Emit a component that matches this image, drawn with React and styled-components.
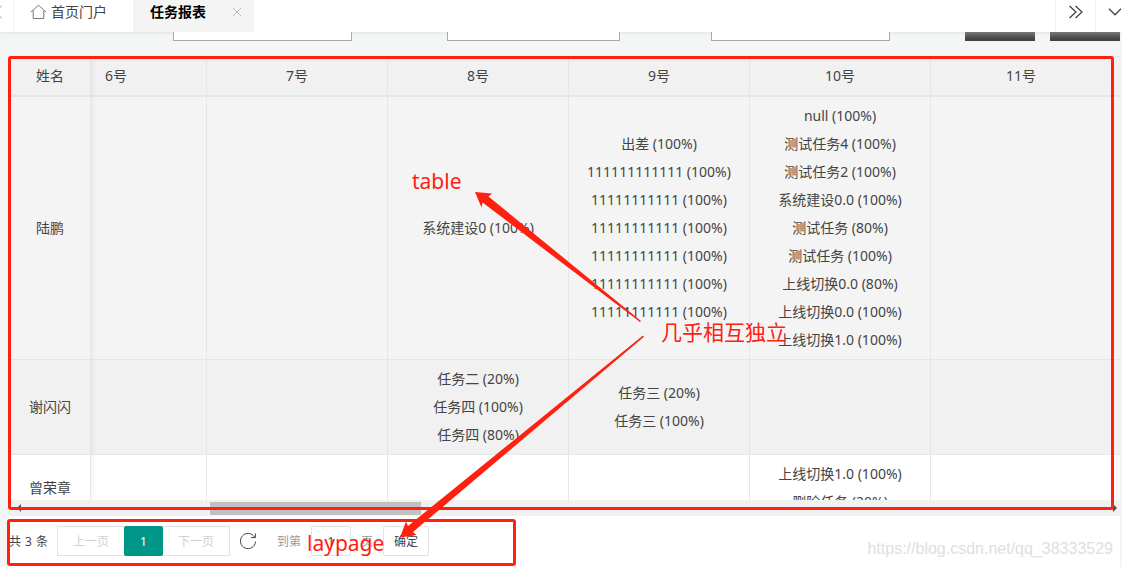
import React from "react";
import styled, { createGlobalStyle } from "styled-components";

const RED = "#ff2010";
const LINE = "#e6e6e6";

const GlobalStyle = createGlobalStyle`
  *, *::before, *::after { box-sizing: border-box; }
  body { margin: 0; }
  body, button, input, select {
    font-family: "Noto Sans", "Noto Sans CJK SC", sans-serif;
  }
`;

const Page = styled.div`
  position: relative;
  display: flex;
  flex-direction: column;
  height: 100vh;
  overflow: hidden;
  background: #f4f6f6;
  color: #444;
  font-size: 14px;
`;

const TabBar = styled.nav`
  display: flex;
  flex: none;
  height: 32px;
  background: #fff;
  box-shadow: 0 1px 3px rgba(0, 0, 0, 0.08);
`;

const Tab = styled.a`
  display: flex;
  align-items: center;
  gap: 4px;
  padding: 0 26px 8px 16px;
  border-left: 1px solid #f4f4f4;
  color: #444;
  line-height: 24px;
  text-decoration: none;
`;

const ActiveTab = styled.div`
  display: flex;
  align-items: center;
  gap: 25px;
  padding: 0 11px 8px 17px;
  background: #f4f4f4;
  color: #000;
  font-weight: 700;
  line-height: 24px;
`;

const IconButton = styled.button`
  display: flex;
  align-items: center;
  justify-content: center;
  padding: 0;
  border: 0;
  background: none;
  color: ${(p) => p.$color || "#444"};
`;

const ScrollLeft = styled(IconButton)`
  justify-content: flex-start;
  width: 13px;
  padding-bottom: 8px;
`;

const TabTools = styled.div`
  display: flex;
  margin-left: auto;
  button {
    width: 40px;
    padding-bottom: 8px;
    border-left: 1px solid #f4f4f4;
  }
  button:last-child {
    width: 27px;
    padding-left: 12px;
    overflow: hidden;
  }
`;

const Filters = styled.form`
  display: grid;
  grid-template-columns: 179fr 95fr 173fr 91fr 179fr 75fr 70fr 15fr 70fr;
  flex: none;
  margin: 0 2px 15px 173px;
  & > :nth-child(2) { grid-column: 3; }
  & > :nth-child(3) { grid-column: 5; }
  & > :nth-child(4) { grid-column: 7; }
  & > :nth-child(5) { grid-column: 9; }
`;

const FilterInput = styled.input`
  width: 100%;
  height: 9px;
  padding: 0;
  border: 1px solid #a9a9a9;
  border-top: 0;
  border-radius: 0;
  background: #fff;
`;

const FilterButton = styled.button`
  height: 9px;
  padding: 0;
  border: 0;
  background: linear-gradient(#777, #484848 70%, #404040);
`;

const Card = styled.main`
  display: flex;
  flex: 1;
  flex-direction: column;
  min-height: 0;
  margin: 0 2px 0 9px;
  background: #fff;
`;

const TableArea = styled.div`
  display: flex;
  flex: 1;
  min-height: 0;
  overflow: hidden;
  border: 1px solid ${LINE};
  border-width: 1px 0 0 1px;
`;

const FrozenPane = styled.div`
  position: relative;
  z-index: 1;
  flex: none;
  width: 81px;
  box-shadow: 0 0 8px rgba(0, 0, 0, 0.08);
`;

const ScrollPane = styled.div`
  flex: 1;
  min-width: 0;
  overflow: hidden;
`;

const Grid = styled.table`
  width: ${(p) => p.$width}px;
  margin-left: ${(p) => p.$shift || 0}px;
  table-layout: fixed;
  border-collapse: separate;
  border-spacing: 0;
`;

const HeadCell = styled.th`
  height: 40px;
  padding: 0;
  border-right: 1px solid ${LINE};
  border-bottom: 2px solid ${LINE};
  background: #f1f1f1;
  font-weight: 400;
  line-height: 28px;
  text-align: center;
`;

const Row = styled.tr`
  background: ${(p) => p.$tone};
`;

const Cell = styled.td`
  height: ${(p) => p.$lines * 28 + 11}px;
  padding: 5px 0;
  border-right: 1px solid ${LINE};
  border-bottom: 1px solid ${LINE};
  line-height: 28px;
  text-align: center;
  white-space: nowrap;
`;

const Task = styled.div`
  height: 28px;
`;

const ScrollTrack = styled.div`
  display: flex;
  align-items: center;
  justify-content: space-between;
  flex: none;
  height: 16px;
  padding: 0 3px 0 8px;
  background: #f1f1f1;
`;

const ScrollThumb = styled.div`
  width: 19.2%;
  height: 13px;
  margin-right: auto;
  margin-left: 17.2%;
  background: #c1c1c1;
`;

const Pager = styled.div`
  display: flex;
  align-items: flex-start;
  flex: none;
  height: 51px;
  padding-top: 10px;
  font-size: 12px;
  line-height: 32px;
`;

const Total = styled.span`
  display: flex;
  gap: 4px;
  width: 48px;
  white-space: nowrap;
`;

const PageButton = styled.button`
  height: 30px;
  margin-right: -1px;
  padding: 2px 15px 0;
  border: 1px solid #e2e2e2;
  background: #fff;
  color: #d2d2d2;
  font-size: 12px;
  line-height: 26px;
`;

const CurrentPage = styled(PageButton)`
  position: relative;
  width: 39px;
  border-color: #009688;
  border-radius: 2px;
  background: #009688;
  color: #fff;
`;

const Refresh = styled(IconButton)`
  width: 18px;
  height: 30px;
  margin: 0 20px 0 10px;
`;

const Jump = styled.label`
  display: flex;
  gap: 10px;
  color: #999;
`;

const PageInput = styled.input`
  width: 40px;
  height: 30px;
  padding: 0;
  border: 1px solid #e2e2e2;
  border-radius: 2px;
  background: #fff;
  color: #444;
  font-size: 12px;
  text-align: center;
`;

const Confirm = styled(PageButton)`
  margin-left: 10px;
  padding: 2px 10px 0;
  border-radius: 2px;
  color: #444;
`;

const Marks = styled.div`
  position: absolute;
  inset: 0;
  z-index: 2;
  pointer-events: none;
`;

const Frame = styled.div`
  position: absolute;
  border: 3px solid ${RED};
  border-radius: 3px;
`;

const TableFrame = styled(Frame)`
  top: 56px;
  right: 8px;
  bottom: 57px;
  left: 8px;
`;

const PagerFrame = styled(Frame)`
  bottom: 1px;
  left: 7px;
  width: 509px;
  height: 47px;
`;

const Arrows = styled.svg`
  position: absolute;
  top: 0;
  left: 0;
  fill: ${RED};
`;

const Note = styled.span`
  position: absolute;
  top: ${(p) => p.$y}px;
  left: ${(p) => p.$x}px;
  color: ${RED};
  font-size: 21px;
  line-height: 30px;
  white-space: nowrap;
`;

const Watermark = styled.span`
  position: absolute;
  right: 9px;
  bottom: 8px;
  color: #dedede;
  font-family: "Liberation Sans", sans-serif;
  font-size: 16px;
  line-height: 20px;
`;

const days = ["6号", "7号", "8号", "9号", "10号", "11号", ""];

const people = [
  {
    name: "陆鹏",
    tone: "#f4f4f4",
    lines: 9,
    tasks: [
      [],
      [],
      ["系统建设0 (100%)"],
      [
        "出差 (100%)",
        "111111111111 (100%)",
        "11111111111 (100%)",
        "11111111111 (100%)",
        "11111111111 (100%)",
        "11111111111 (100%)",
        "11111111111 (100%)",
      ],
      [
        "null (100%)",
        "测试任务4 (100%)",
        "测试任务2 (100%)",
        "系统建设0.0 (100%)",
        "测试任务 (80%)",
        "测试任务 (100%)",
        "上线切换0.0 (80%)",
        "上线切换0.0 (100%)",
        "上线切换1.0 (100%)",
      ],
      [],
      [],
    ],
  },
  {
    name: "谢闪闪",
    tone: "#f1f1f1",
    lines: 3,
    tasks: [
      [],
      [],
      ["任务二 (20%)", "任务四 (100%)", "任务四 (80%)"],
      ["任务三 (20%)", "任务三 (100%)"],
      [],
      [],
      [],
    ],
  },
  {
    name: "曾荣章",
    tone: "#fff",
    lines: 2,
    tasks: [[], [], [], [], ["上线切换1.0 (100%)", "删除任务 (20%)"], [], []],
  },
];

function Stroke({ w, h, d, width = 1, color = "currentColor" }) {
  return (
    <svg width={w} height={h} viewBox={`0 0 ${w} ${h}`} fill="none" stroke={color} strokeWidth={width} aria-hidden="true">
      <path d={d} />
    </svg>
  );
}

function Tabs() {
  return (
    <TabBar>
      <ScrollLeft $color="#aaa" aria-label="向左">
        <Stroke w={2} h={14} d="M1.5 .5 -4 7 1.5 13.5" />
      </ScrollLeft>
      <Tab href="#home">
        <Stroke w={17} h={16} color="#777" d="M.8 8.2 8.5 1.2 16.2 8.2M3.2 6.5V14.5H13.8V6.5" />
        首页门户
      </Tab>
      <ActiveTab>
        任务报表
        <IconButton $color="#b8b8b8" aria-label="关闭">
          <Stroke w={12} h={10} d="M2 1 10 9M10 1 2 9" />
        </IconButton>
      </ActiveTab>
      <TabTools>
        <IconButton aria-label="向右">
          <Stroke w={16} h={14} width={1.3} d="M1.5 1 8 7 1.5 13M7.5 1 14 7 7.5 13" />
        </IconButton>
        <IconButton aria-label="更多">
          <Stroke w={15} h={10} width={1.3} d="M1 1.5 7.5 8 14 1.5" />
        </IconButton>
      </TabTools>
    </TabBar>
  );
}

function NameTable() {
  return (
    <Grid $width={81}>
      <thead>
        <tr><HeadCell scope="col">姓名</HeadCell></tr>
      </thead>
      <tbody>
        {people.map((p) => (
          <Row key={p.name} $tone={p.tone}>
            <Cell $lines={p.lines}>{p.name}</Cell>
          </Row>
        ))}
      </tbody>
    </Grid>
  );
}

function TaskTable() {
  return (
    <Grid $width={days.length * 181} $shift={-65}>
      <thead>
        <tr>
          {days.map((d, i) => <HeadCell key={i} scope="col">{d}</HeadCell>)}
        </tr>
      </thead>
      <tbody>
        {people.map((p) => (
          <Row key={p.name} $tone={p.tone}>
            {p.tasks.map((list, i) => (
              <Cell key={i} $lines={p.lines}>
                {list.map((t, j) => <Task key={j}>{t}</Task>)}
              </Cell>
            ))}
          </Row>
        ))}
      </tbody>
    </Grid>
  );
}

export default function App() {
  return (
    <Page>
      <GlobalStyle />
      <Tabs />
      <Filters>
        <FilterInput aria-label="年份" />
        <FilterInput aria-label="月份" />
        <FilterInput aria-label="姓名" />
        <FilterButton type="button" aria-label="查询" />
        <FilterButton type="button" aria-label="重置" />
      </Filters>
      <Card>
        <TableArea>
          <FrozenPane><NameTable /></FrozenPane>
          <ScrollPane><TaskTable /></ScrollPane>
        </TableArea>
        <ScrollTrack>
          <svg width="4" height="8" viewBox="0 0 4 8" aria-hidden="true"><path d="M4 0V8L0 4Z" fill="#505050" /></svg>
          <ScrollThumb />
          <svg width="4" height="8" viewBox="0 0 4 8" aria-hidden="true"><path d="M0 0V8L4 4Z" fill="#505050" /></svg>
        </ScrollTrack>
        <Pager>
          <Total><span>共</span> <span>3</span> <span>条</span></Total>
          <PageButton type="button">上一页</PageButton>
          <CurrentPage type="button">1</CurrentPage>
          <PageButton type="button">下一页</PageButton>
          <Refresh type="button" aria-label="刷新">
            <Stroke w={18} h={18} width={1} color="#444" d="M15.6 5.2A7.6 7.6 0 1 0 16.6 9.6M16.4 1.4V5.6H12" />
          </Refresh>
          <Jump>
            到第
            <PageInput defaultValue="1" />
            页
          </Jump>
          <Confirm type="button">确定</Confirm>
        </Pager>
      </Card>
      <Marks>
        <TableFrame />
        <PagerFrame />
        <Arrows width="660" height="560" viewBox="0 0 660 560" aria-hidden="true">
          <path d="M475 192 492 193.5 488.5 196.5 641 321 640 322 482.5 202.5 481.5 207.5Z" />
          <path d="M400 537.5 406 521.5 408 526 643 335.5 644 336.8 413 532 416.5 535Z" />
        </Arrows>
        <Note $x={412} $y={166}>table</Note>
        <Note $x={661} $y={317}>几乎相互独立</Note>
        <Note $x={307} $y={528}>laypage</Note>
        <Watermark>https://blog.csdn.net/qq_38333529</Watermark>
      </Marks>
    </Page>
  );
}
